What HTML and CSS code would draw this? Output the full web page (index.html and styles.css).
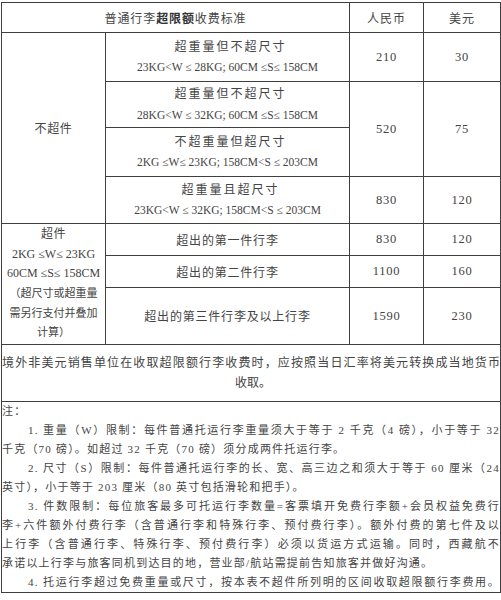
FILE: index.html
```html
<!DOCTYPE html>
<html lang="zh-CN">
<head>
<meta charset="utf-8">
<title>普通行李超限额收费标准</title>
<link rel="stylesheet" href="styles.css">
</head>
<body>
<table class="fee">
  <colgroup>
    <col class="c1"><col class="c2"><col class="c3"><col class="c4">
  </colgroup>
  <tr class="r-head">
    <th colspan="2" class="title">普通行李<b>超限额</b>收费标准</th>
    <th class="cur">人民币</th>
    <th class="cur">美元</th>
  </tr>
  <tr class="r1">
    <td rowspan="4" class="cat">不超件</td>
    <td class="desc"><span class="zh">超重量但不超尺寸</span><span class="spec">23KG&lt;W ≤ 28KG; 60CM ≤S≤ 158CM</span></td>
    <td class="num">210</td>
    <td class="num">30</td>
  </tr>
  <tr class="r2">
    <td class="desc"><span class="zh">超重量但不超尺寸</span><span class="spec">28KG&lt;W ≤ 32KG; 60CM ≤S≤ 158CM</span></td>
    <td rowspan="2" class="num">520</td>
    <td rowspan="2" class="num">75</td>
  </tr>
  <tr class="r3">
    <td class="desc"><span class="zh">不超重量但超尺寸</span><span class="spec">2KG ≤W≤ 23KG; 158CM&lt;S ≤ 203CM</span></td>
  </tr>
  <tr class="r4">
    <td class="desc"><span class="zh">超重量且超尺寸</span><span class="spec">23KG&lt;W ≤ 32KG; 158CM&lt;S ≤ 203CM</span></td>
    <td class="num">830</td>
    <td class="num">120</td>
  </tr>
  <tr class="r5">
    <td rowspan="3" class="cat multi">
      <span class="ln">超件</span>
      <span class="ln spec2">2KG ≤W≤ 23KG</span>
      <span class="ln spec2">60CM ≤S≤ 158CM</span>
      <span class="ln small">（超尺寸或超重量</span>
      <span class="ln small">需另行支付并叠加</span>
      <span class="ln small">计算）</span>
    </td>
    <td class="desc piece">超出的第一件行李</td>
    <td class="num">830</td>
    <td class="num">120</td>
  </tr>
  <tr class="r6">
    <td class="desc piece">超出的第二件行李</td>
    <td class="num">1100</td>
    <td class="num">160</td>
  </tr>
  <tr class="r7">
    <td class="desc piece">超出的第三件行李及以上行李</td>
    <td class="num">1590</td>
    <td class="num">230</td>
  </tr>
  <tr class="r8">
    <td colspan="4" class="remark">
      <span class="jl">境外非美元销售单位在收取超限额行李收费时，应按照当日汇率将美元转换成当地货币</span>
      <span class="cl">收取。</span>
    </td>
  </tr>
  <tr class="r9">
    <td colspan="4" class="notes">
      <span class="nl lead">注：</span>
      <span class="nl first">1. 重量（W）限制：每件普通托运行李重量须大于等于 2 千克（4 磅），小于等于 32</span>
      <span class="nl end">千克（70 磅）。如超过 32 千克（70 磅）须分成两件托运行李。</span>
      <span class="nl first">2. 尺寸（S）限制：每件普通托运行李的长、宽、高三边之和须大于等于 60 厘米（24</span>
      <span class="nl end">英寸），小于等于 203 厘米（80 英寸包括滑轮和把手）。</span>
      <span class="nl first">3. 件数限制：每位旅客最多可托运行李数量=客票填开免费行李额+会员权益免费行</span>
      <span class="nl">李+六件额外付费行李（含普通行李和特殊行李、预付费行李）。额外付费的第七件及以</span>
      <span class="nl">上行李（含普通行李、特殊行李、预付费行李）必须以货运方式运输。同时，西藏航不</span>
      <span class="nl end">承诺以上行李与旅客同机到达目的地，营业部/航站需提前告知旅客并做好沟通。</span>
      <span class="nl first">4. 托运行李超过免费重量或尺寸，按本表不超件所列明的区间收取超限额行李费用。</span>
    </td>
  </tr>
</table>
</body>
</html>
```
FILE: styles.css
```css
html, body {
  margin: 0;
  padding: 0;
  background: #ffffff;
}

body {
  font-family: "Liberation Serif", "Noto Sans CJK SC", serif;
  color: #444444;
  font-size: 12px;
}

.fee {
  border-collapse: collapse;
  table-layout: fixed;
  width: 499px;
  margin: 2px 0 0 1px;
}

.c1 { width: 104px; }
.c2 { width: 244px; }
.c3 { width: 74px; }
.c4 { width: 77px; }

.fee th,
.fee td {
  border: 1.5px solid #3f3f3f;
  padding: 0;
  text-align: center;
  vertical-align: middle;
  font-weight: normal;
}

.r-head th { height: 29px; }
.r1 td { height: 48px; }
.r2 td { height: 45px; }
.r3 td { height: 48px; }
.r4 td { height: 46px; }
.r5 td { height: 31px; }
.r6 td { height: 31px; }
.r7 td { height: 56px; }
.r8 td { height: 56px; }

.title {
  letter-spacing: 0.9px;
  font-size: 12px;
  padding-left: 2px;
}

.title b {
  font-weight: bold;
  color: #333333;
}

.cur {
  letter-spacing: 1px;
}

.cat {
  letter-spacing: 0.6px;
}

.multi {
  padding-top: 2px;
}

.ln {
  display: block;
  line-height: 19.6px;
}

.spec2 {
  letter-spacing: 0;
  font-size: 12px;
}

.small {
  font-size: 11px;
  letter-spacing: 0;
}

.desc .zh,
.desc .spec {
  display: block;
  line-height: 20.5px;
}

.desc .zh {
  letter-spacing: 2px;
  padding-left: 6px;
}

.desc .spec {
  font-size: 11.5px;
  letter-spacing: 0;
}

.piece {
  letter-spacing: 0.8px;
}

.num {
  letter-spacing: 0.8px;
  font-size: 12.5px;
}

.remark {
  padding: 8px 8px 0 7px;
  vertical-align: top;
  text-align: left;
}

.jl {
  display: block;
  text-align: justify;
  text-align-last: justify;
  line-height: 20px;
}

.cl {
  display: block;
  text-align: center;
  line-height: 20px;
  padding-left: 4px;
}

.notes {
  text-align: left;
  vertical-align: top;
  padding: 3px 5px 20px 6px;
}

.nl {
  display: block;
  font-size: 11px;
  letter-spacing: 1.2px;
  line-height: 19px;
  text-align: justify;
  text-align-last: justify;
}

.nl.lead,
.nl.end {
  text-align-last: left;
}

.nl.first {
  text-indent: 26px;
}
```
